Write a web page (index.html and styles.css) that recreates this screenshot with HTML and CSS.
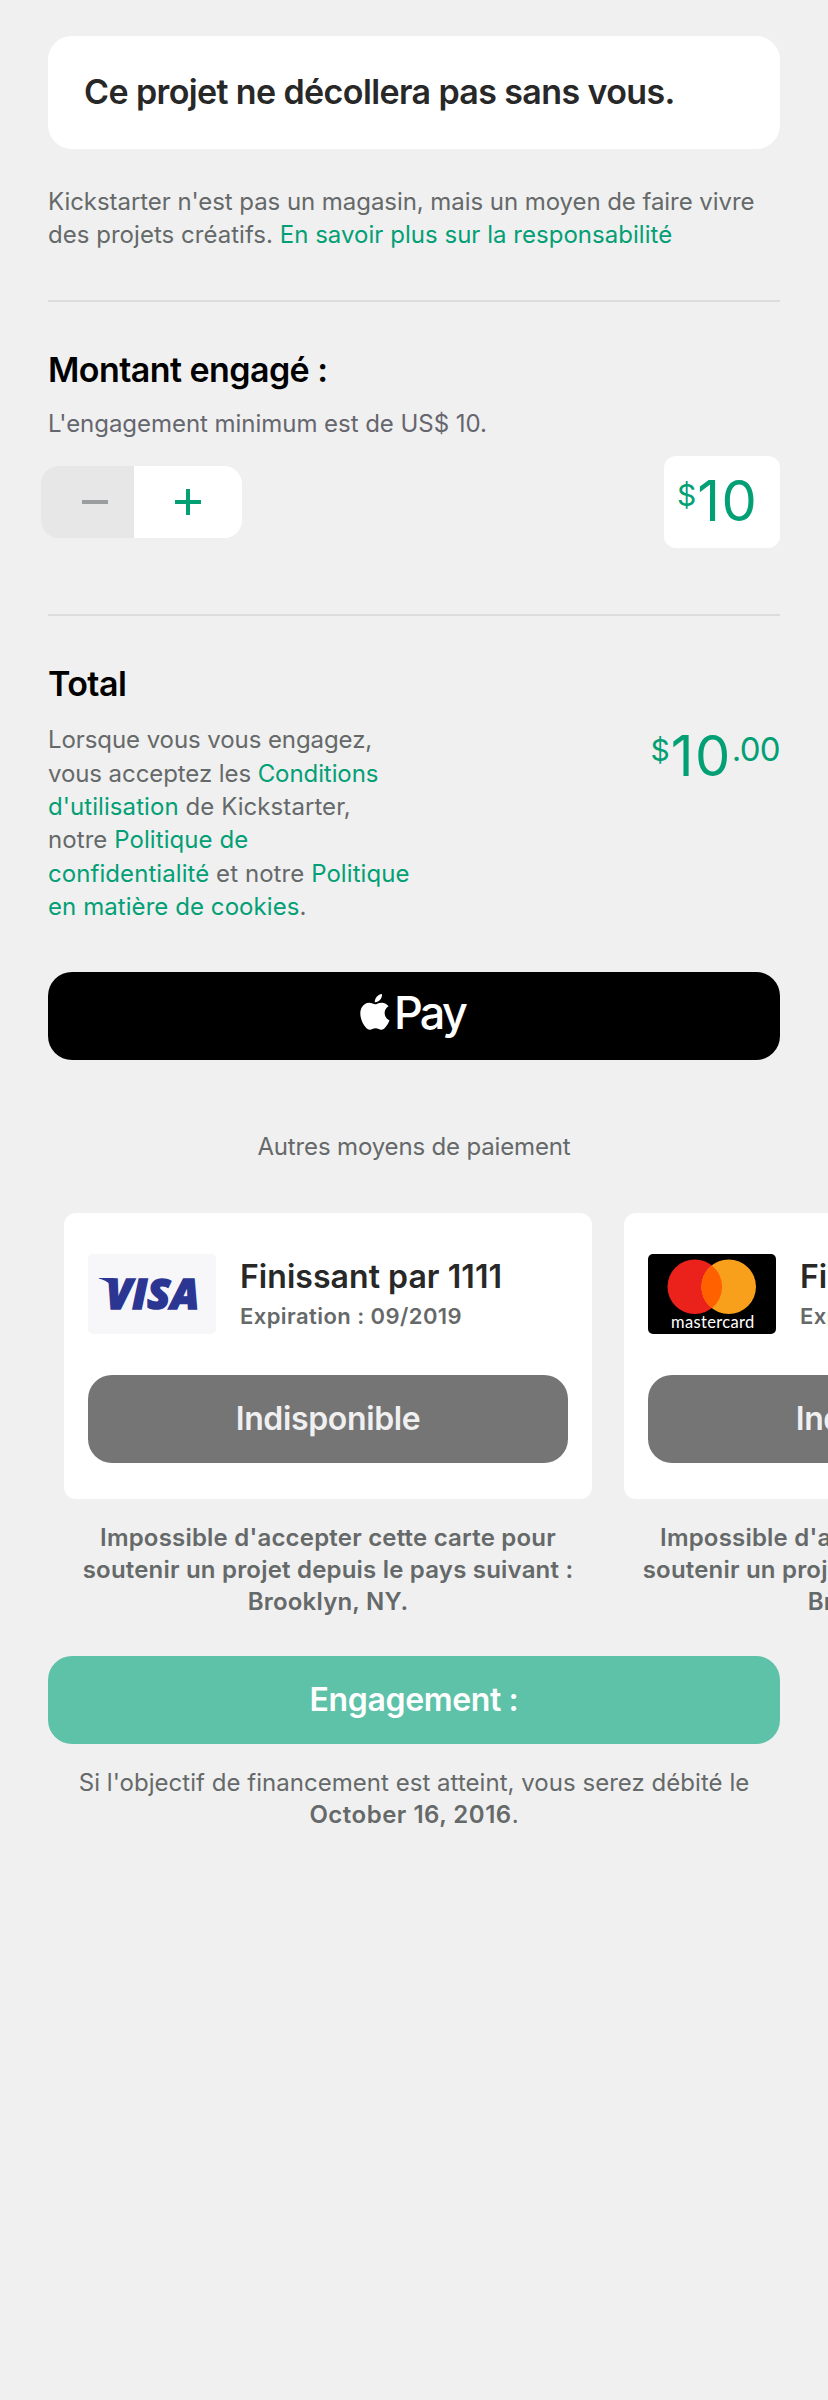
FILE: index.html
```
<!DOCTYPE html>
<html lang="fr">
<head>
<meta charset="utf-8">
<title>Engagement</title>
<link rel="stylesheet" href="styles.css">
</head>
<body>
<main class="page">
  <h1 class="notice">Ce projet ne décollera pas sans vous.</h1>
  <p class="body-text intro">Kickstarter n'est pas un magasin, mais un moyen de faire vivre<br><span class="intro-second">des projets créatifs. <a class="link">En savoir plus sur la responsabilité</a></span></p>

  <section class="section">
    <h2 class="heading">Montant engagé :</h2>
    <p class="minimum">L'engagement minimum est de US$ 10.</p>
    <div class="amount-row">
      <div class="stepper">
        <button class="step step-minus" aria-label="Moins"><svg width="28" height="28" viewBox="0 0 28 28"><path d="M1 14h26" stroke="#9b9e9e" stroke-width="4"/></svg></button>
        <button class="step step-plus" aria-label="Plus"><svg width="28" height="28" viewBox="0 0 28 28"><path d="M1 14h26M14 1v26" stroke="#039f75" stroke-width="4"/></svg></button>
      </div>
      <div class="amount-box"><span class="money"><span class="currency">$</span><span class="units">10</span></span></div>
    </div>
  </section>

  <section class="section section-total">
    <h2 class="heading">Total</h2>
    <div class="total-row">
      <p class="body-text terms"><span class="terms-start">Lorsque vous vous engagez,<br>vous acceptez les <a class="link">Conditions</a></span><br><a class="link">d'utilisation</a> de Kickstarter,<br>notre <a class="link">Politique de<br>confidentialité</a> et notre <a class="link">Politique<br>en matière de cookies</a>.</p>
      <span class="money total-money"><span class="currency">$</span><span class="units">10</span><span class="cents">.00</span></span>
    </div>
  </section>

  <button class="button apple-pay" aria-label="Apple Pay">
    <svg width="112" height="52" viewBox="0 0 112 52">
      <path fill="#fff" transform="translate(-1 4) scale(1.49)" d="M12.152 6.896c-.948 0-2.415-1.078-3.96-1.04-2.04.027-3.91 1.183-4.961 3.014-2.117 3.675-.546 9.103 1.519 12.09 1.013 1.454 2.208 3.09 3.792 3.039 1.52-.065 2.09-.987 3.935-.987 1.831 0 2.35.987 3.96.948 1.637-.026 2.676-1.48 3.676-2.948 1.156-1.688 1.636-3.325 1.662-3.415-.039-.013-3.182-1.221-3.22-4.857-.026-3.04 2.48-4.494 2.597-4.559-1.429-2.09-3.623-2.324-4.39-2.376-2-.156-3.675 1.09-4.61 1.09zM15.53 3.83c.843-1.012 1.4-2.427 1.245-3.83-1.207.052-2.662.805-3.532 1.818-.78.896-1.454 2.338-1.273 3.714 1.338.104 2.715-.688 3.559-1.701"/>
      <text class="pay-text" x="36" y="39">Pay</text>
    </svg>
  </button>
  <p class="other">Autres moyens de paiement</p>
</main>

<div class="cards">
  <article class="card-item">
    <div class="card">
      <div class="card-info">
        <svg class="brand" width="128" height="80" viewBox="0 0 128 80">
          <rect width="128" height="80" rx="5" fill="#f7f7fa"/>
          <path d="M10.7 24.5L11 24H26l4 17C26 32 20 27 10.7 24.5z" fill="#2b3693"/>
          <text class="visa" x="18" y="55">VISA</text>
        </svg>
        <div>
          <h3 class="card-title">Finissant par 1111</h3>
          <p class="card-date">Expiration : 09/2019</p>
        </div>
      </div>
      <button class="button unavailable">Indisponible</button>
    </div>
    <p class="caption">Impossible d'accepter cette carte pour<br>soutenir un projet depuis le pays suivant :<br>Brooklyn, NY.</p>
  </article>
  <article class="card-item">
    <div class="card">
      <div class="card-info">
        <svg class="brand" width="128" height="80" viewBox="0 0 128 80">
          <rect width="128" height="80" rx="5" fill="#000"/>
          <circle cx="46.8" cy="32.8" r="27.3" fill="#eb221c"/>
          <circle cx="80.7" cy="32.8" r="27.3" fill="#f89f1c"/>
          <path d="M63.75 11.4a27.3 27.3 0 0 1 0 42.8a27.3 27.3 0 0 1 0-42.8z" fill="#ff6000"/>
          <text class="mastercard" x="23" y="74.3">mastercard</text>
        </svg>
        <div>
          <h3 class="card-title">Finissant par 5555</h3>
          <p class="card-date">Expiration : 09/2019</p>
        </div>
      </div>
      <button class="button unavailable">Indisponible</button>
    </div>
    <p class="caption">Impossible d'accepter cette carte pour<br>soutenir un projet depuis le pays suivant :<br>Brooklyn, NY.</p>
  </article>
</div>

<footer class="footer">
  <button class="button pledge">Engagement :</button>
  <p class="debit">Si l'objectif de financement est atteint, vous serez débité le<br><strong class="date">October 16, 2016</strong>.</p>
</footer>
</body>
</html>
```
FILE: styles.css
```
* { box-sizing: border-box; }
body {
  margin: 0;
  min-height: 2400px;
  overflow-x: hidden;
  background: #f0f0f0;
  color: #656969;
  font-family: Inter, "Liberation Sans", sans-serif;
  font-size: 24px;
  line-height: 33.35px;
  white-space: nowrap;
}
h1, h2, h3, p { margin: 0; }
button { border: 0; padding: 0; font-family: inherit; }
svg { display: block; }
.link { color: #039f75; }

.page { padding: 36px 48px 0; }
.notice {
  height: 113px;
  padding-left: 36px;
  border-radius: 24px;
  background: #fff;
  color: #282828;
  font-size: 34px;
  font-weight: 600;
  line-height: 112px;
  letter-spacing: -0.61px;
}
.intro { margin: 36px 0 48.3px; letter-spacing: -0.06px; }
.intro-second { letter-spacing: 0.03px; }

.section {
  border-top: 2px solid #dcdcdc;
  padding: 47.6px 0 66px;
}
.section-total { padding-bottom: 48.5px; }
.heading {
  color: #000;
  font-size: 34px;
  font-weight: 600;
  line-height: 40px;
  letter-spacing: -0.56px;
}
.minimum {
  margin: 17.7px 0 14.7px;
  color: #66666e;
  line-height: 34px;
  letter-spacing: -0.039px;
}
.amount-row { display: flex; align-items: center; justify-content: space-between; }
.stepper {
  display: flex;
  width: 201px;
  height: 72px;
  margin-left: -7px;
  border-radius: 18px;
  overflow: hidden;
}
.step { display: flex; align-items: center; }
.step-minus { width: 93px; padding-left: 40px; background: #e7e7e7; }
.step-plus { width: 108px; padding-left: 40px; background: #fff; }
.amount-box {
  width: 116px;
  height: 92px;
  padding: 17px 0 0 13px;
  border-radius: 12px;
  background: #fff;
}
.money {
  display: flex;
  align-items: baseline;
  height: 56px;
  color: #039f75;
  line-height: 56px;
}
.currency { transform: translateY(-15px); font-size: 30px; }
.units { margin-left: 1px; font-size: 56px; letter-spacing: 1.5px; }
.cents { transform: translateY(-15px); font-size: 33px; letter-spacing: -0.7px; }

.total-row { display: flex; justify-content: space-between; margin-top: 19.8px; }
.terms { letter-spacing: 0.07px; }
.terms-start { letter-spacing: -0.08px; }
.total-money { margin-top: 5px; }

.button {
  display: flex;
  align-items: center;
  justify-content: center;
  width: 100%;
  height: 88px;
  border-radius: 24px;
  color: #fff;
  font-size: 32px;
  font-weight: 600;
  letter-spacing: -0.36px;
}
.apple-pay { background: #000; }
.pay-text { fill: #fff; font: 500 45px Inter, sans-serif; letter-spacing: -2.8px; }
.other {
  margin: 70px 0 49px;
  line-height: 34px;
  letter-spacing: -0.15px;
  text-align: center;
}

.cards { display: flex; gap: 32px; padding-left: 64px; overflow: hidden; }
.card-item { flex: 0 0 528px; }
.card {
  height: 286px;
  padding: 41px 24px 0;
  border-radius: 12px;
  background: #fff;
}
.card-info { display: flex; align-items: center; gap: 24px; height: 80px; margin-bottom: 41px; }
.card-title { color: #282828; font-size: 32px; font-weight: 600; line-height: 40px; letter-spacing: 0.05px; }
.card-date { margin-top: 4.6px; font-size: 22px; font-weight: 600; line-height: 30px; letter-spacing: 0.43px; }
.visa { fill: #2b3693; stroke: #2b3693; stroke-width: 1.6px; font: italic 800 42px "Open Sans", sans-serif; letter-spacing: 0.3px; }
.mastercard { fill: #fff; font: 400 16.5px Lato, sans-serif; letter-spacing: 0.35px; }
.unavailable { background: #757575; color: #f0f0f0; }
.caption {
  margin-top: 23px;
  font-weight: 600;
  line-height: 32px;
  letter-spacing: 0.2px;
  text-align: center;
}

.footer { padding: 38px 48px 0; }
.pledge { background: #5ec2a9; }
.debit { margin-top: 23.3px; line-height: 32px; letter-spacing: 0.034px; text-align: center; }
.date { font-weight: 600; letter-spacing: 0.5px; }
```
